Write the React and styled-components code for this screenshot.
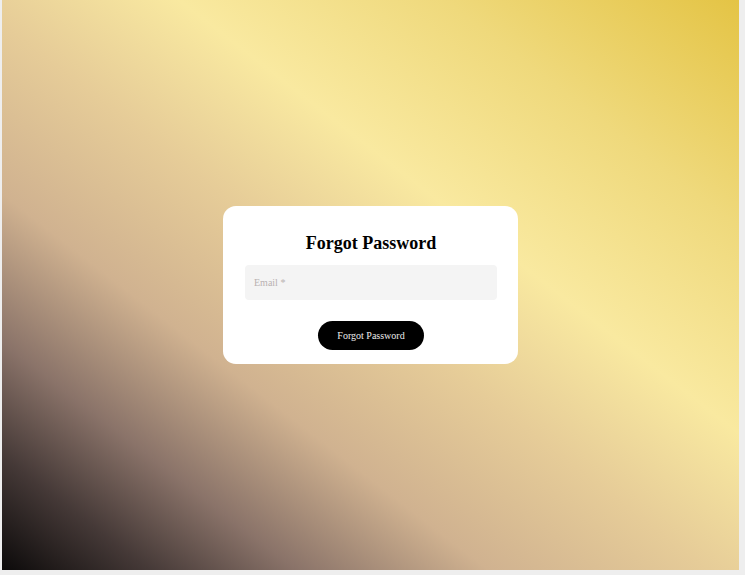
import React from "react";
import styled, { createGlobalStyle } from "styled-components";

const GlobalStyle = createGlobalStyle`
  html, body {
    margin: 0;
    padding: 0;
    height: 100%;
  }
  body {
    background: #efefef;
    font-family: "Liberation Serif", "Times New Roman", serif;
  }
  #root {
    height: 100%;
  }
`;

const Page = styled.div`
  box-sizing: border-box;
  height: 100vh;
  padding: 0 6px 5px 2px;
  display: flex;
  background: #eeeeee;
`;

const Backdrop = styled.main`
  flex: 1;
  display: flex;
  align-items: center;
  justify-content: center;
  background: linear-gradient(
    to top right,
    #0c0a0a 0%,
    #453937 10%,
    #8a7369 20%,
    #d0b290 33%,
    #e6cc98 48%,
    #f9e9a0 62%,
    #efd97c 80%,
    #e4c445 100%
  );
`;

const Card = styled.form`
  box-sizing: border-box;
  width: 295px;
  padding: 27px 21px 14px 22px;
  background: #ffffff;
  border-radius: 13px;
  display: flex;
  flex-direction: column;
  align-items: center;
`;

const Title = styled.h2`
  margin: 0 0 11px;
  font-size: 18px;
  font-weight: bold;
  line-height: 21px;
  color: #000;
`;

const EmailInput = styled.input`
  box-sizing: border-box;
  width: 100%;
  height: 35px;
  padding: 0 9px;
  border: none;
  border-radius: 4px;
  background: #f4f4f4;
  font-family: "Liberation Serif", "Times New Roman", serif;
  font-size: 10px;
  color: #333;
  outline: none;
  &::placeholder {
    color: #b9b1b1;
  }
`;

const SubmitButton = styled.button`
  margin-top: 21px;
  height: 29px;
  padding: 0 19.5px;
  border: none;
  border-radius: 15px;
  background: #000;
  color: #ececec;
  font-family: "Liberation Serif", "Times New Roman", serif;
  font-size: 10px;
  cursor: pointer;
`;

export default function App() {
  return (
    <>
      <GlobalStyle />
      <Page>
        <Backdrop>
          <Card onSubmit={(e) => e.preventDefault()}>
            <Title>Forgot Password</Title>
            <EmailInput type="email" placeholder="Email *" />
            <SubmitButton type="submit">Forgot Password</SubmitButton>
          </Card>
        </Backdrop>
      </Page>
    </>
  );
}
